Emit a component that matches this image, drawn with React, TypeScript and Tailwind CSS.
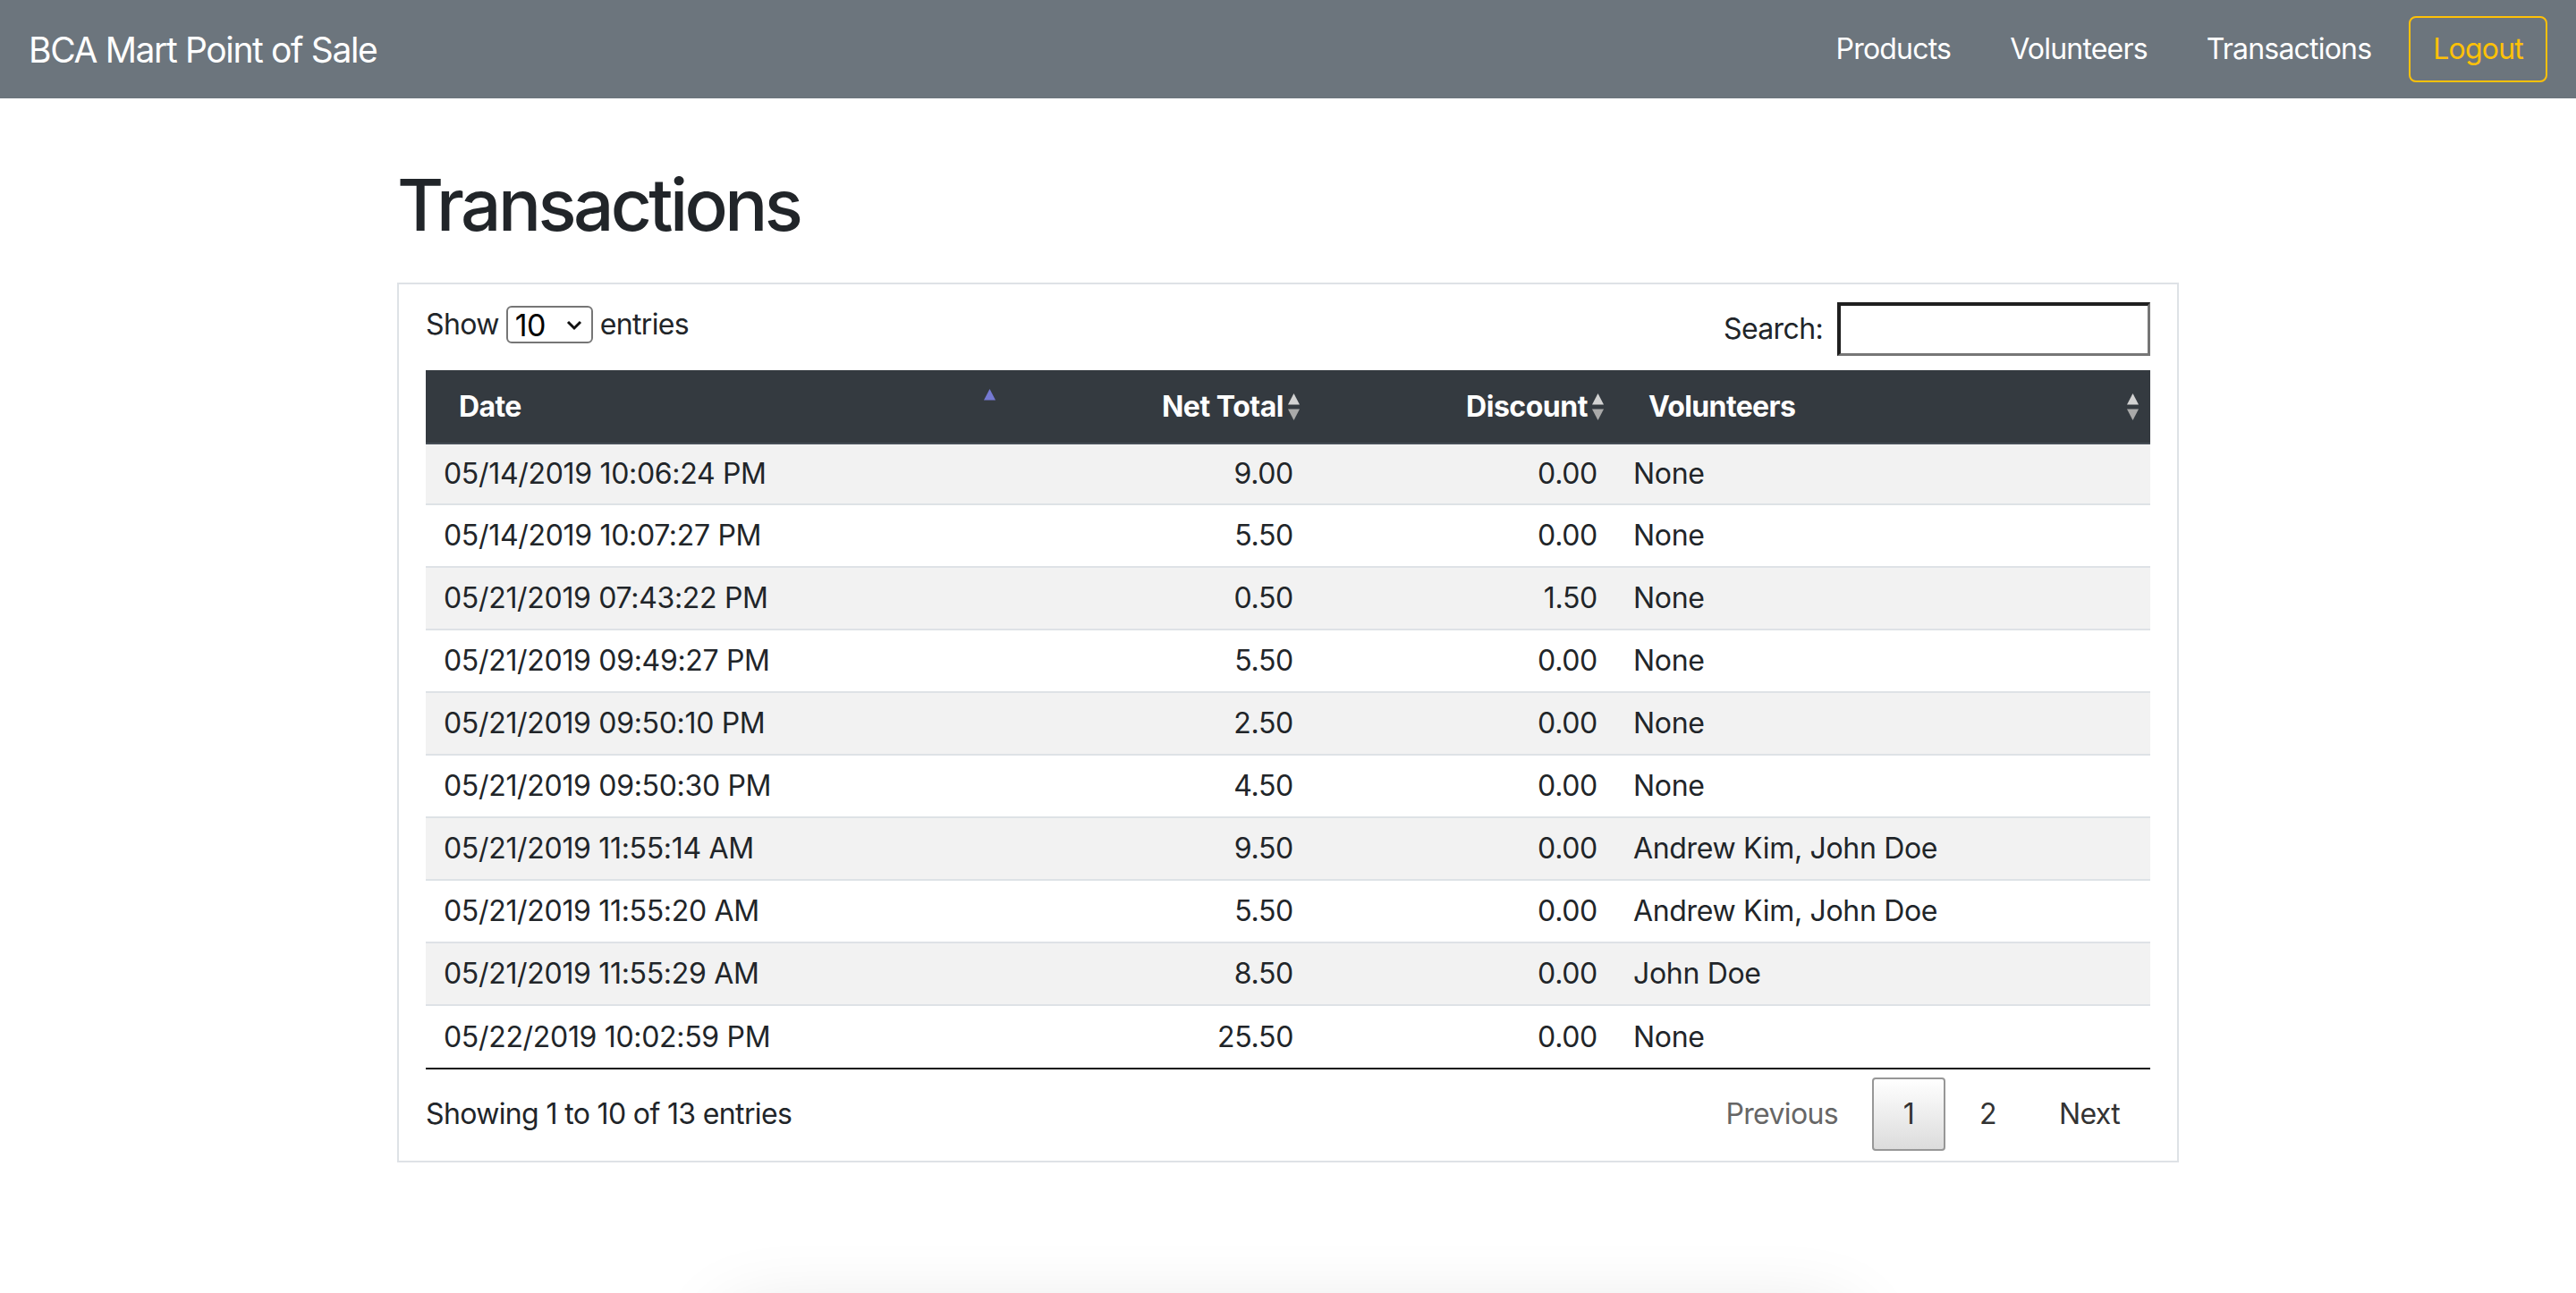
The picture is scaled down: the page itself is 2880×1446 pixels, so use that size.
import React from "react";

const rows = [
  { date: "05/14/2019 10:06:24 PM", net: "9.00", discount: "0.00", volunteers: "None" },
  { date: "05/14/2019 10:07:27 PM", net: "5.50", discount: "0.00", volunteers: "None" },
  { date: "05/21/2019 07:43:22 PM", net: "0.50", discount: "1.50", volunteers: "None" },
  { date: "05/21/2019 09:49:27 PM", net: "5.50", discount: "0.00", volunteers: "None" },
  { date: "05/21/2019 09:50:10 PM", net: "2.50", discount: "0.00", volunteers: "None" },
  { date: "05/21/2019 09:50:30 PM", net: "4.50", discount: "0.00", volunteers: "None" },
  { date: "05/21/2019 11:55:14 AM", net: "9.50", discount: "0.00", volunteers: "Andrew Kim, John Doe" },
  { date: "05/21/2019 11:55:20 AM", net: "5.50", discount: "0.00", volunteers: "Andrew Kim, John Doe" },
  { date: "05/21/2019 11:55:29 AM", net: "8.50", discount: "0.00", volunteers: "John Doe" },
  { date: "05/22/2019 10:02:59 PM", net: "25.50", discount: "0.00", volunteers: "None" }
];

function SortBoth() {
  return (
    <svg width="15" height="32" viewBox="0 0 15 32" className="shrink-0">
      <path d="M7.5 1 L14 13.5 L1 13.5 Z" fill="#d2d2d2" />
      <path d="M7.5 31 L14 18.5 L1 18.5 Z" fill="#a9a9a9" />
    </svg>
  );
}

function SortAsc() {
  return (
    <svg width="15" height="32" viewBox="0 0 15 32" className="shrink-0">
      <path d="M7.5 1 L14 13.5 L1 13.5 Z" fill="#7579d2" />
    </svg>
  );
}

export default function App() {
  return (
    <div className="h-[1446px] w-full overflow-hidden bg-white font-['Inter',sans-serif] text-[#212529]">
      <nav className="flex h-[110px] items-center justify-between bg-[#6c757d] px-[32px]">
        <div className="text-[39px] leading-none tracking-[-0.035em] text-white">BCA Mart Point of Sale</div>
        <div className="flex items-center">
          <div className="flex items-center gap-[66px] text-[32px] tracking-[-0.025em] text-white">
            <span>Products</span>
            <span>Volunteers</span>
            <span>Transactions</span>
          </div>
          <button className="ml-[42px] flex h-[74px] items-center rounded-[8px] border-2 border-[#ffc107] px-[25px] text-[32px] tracking-[-0.025em] text-[#ffc107]">
            Logout
          </button>
        </div>
      </nav>

      <main className="mx-auto w-[1992px]">
        <h1 className="mt-[71px] text-[80px] font-medium leading-[96px] tracking-[-0.045em]">Transactions</h1>

        <section className="mt-[39px] border-2 border-[#dee2e6] px-[30px] pb-[11px] pt-[20px]">
          <div className="flex h-[60px] items-start justify-between">
            <div className="mt-[4px] flex h-[42px] items-center gap-[8px] text-[32px] tracking-[-0.02em]">
              <span>Show</span>
              <div className="relative flex h-[42px] w-[97px] items-center rounded-[6px] border-2 border-[#767676] pl-[8px] text-[34px] text-black">
                <span>10</span>
                <svg width="18" height="12" viewBox="0 0 18 12" className="absolute right-[10px] top-[14px]">
                  <path d="M2 2 L9 9 L16 2" fill="none" stroke="#111" strokeWidth="3" />
                </svg>
              </div>
              <span>entries</span>
            </div>
            <div className="flex h-[60px] items-center gap-[16px] text-[32px] tracking-[-0.02em]">
              <span>Search:</span>
              <div className="h-[60px] w-[350px] border-b-[3px] border-l-[4px] border-r-[3px] border-t-[4px] border-b-[#767676] border-l-[#1f1f1f] border-r-[#767676] border-t-[#1f1f1f] bg-white" />
            </div>
          </div>

          <div className="mt-[16px] border-b-2 border-[#111111]">
            <table className="w-full table-fixed border-collapse text-[32px] tracking-[-0.01em]">
              <colgroup>
                <col className="w-[650px]" />
                <col className="w-[340px]" />
                <col className="w-[340px]" />
                <col />
              </colgroup>
              <thead>
                <tr className="h-[82px] border-b-2 border-[#454d55] bg-[#343a40] text-white">
                  <th className="pl-[37px] pr-[12px] font-bold">
                    <div className="flex items-center justify-between">
                      <span className="tracking-[-0.02em]">Date</span>
                      <span className="-mt-[10px]">
                        <SortAsc />
                      </span>
                    </div>
                  </th>
                  <th className="pr-[12px] font-bold">
                    <div className="flex items-center justify-end gap-[4px]">
                      <span className="tracking-[-0.015em]">Net Total</span>
                      <SortBoth />
                    </div>
                  </th>
                  <th className="pr-[12px] font-bold">
                    <div className="flex items-center justify-end gap-[4px]">
                      <span className="tracking-[-0.015em]">Discount</span>
                      <SortBoth />
                    </div>
                  </th>
                  <th className="pl-[37px] pr-[12px] font-bold">
                    <div className="flex items-center justify-between">
                      <span className="tracking-[-0.02em]">Volunteers</span>
                      <SortBoth />
                    </div>
                  </th>
                </tr>
              </thead>
              <tbody>
                {rows.map((r, i) => (
                  <tr
                    key={i}
                    className={`${i === 0 ? "h-[68px]" : "h-[70px] border-t-2 border-[#dee2e6]"} ${
                      i % 2 === 0 ? "bg-[#f2f2f2]" : "bg-white"
                    }`}
                  >
                    <td className="px-[20px]">{r.date}</td>
                    <td className="px-[20px] text-right">{r.net}</td>
                    <td className="px-[20px] text-right">{r.discount}</td>
                    <td className="px-[20px]">{r.volunteers}</td>
                  </tr>
                ))}
              </tbody>
            </table>
          </div>

          <div className="mt-[9px] flex h-[82px] items-center justify-between text-[32px] tracking-[-0.02em]">
            <span>Showing 1 to 10 of 13 entries</span>
            <div className="flex h-[82px] items-center gap-[6px]">
              <span className="flex h-full items-center px-[32px] text-[#666666]">Previous</span>
              <span className="flex h-full min-w-[82px] items-center justify-center rounded-[4px] border-2 border-[#979797] bg-gradient-to-b from-white to-[#dcdcdc] px-[30px] text-[#333333]">
                1
              </span>
              <span className="flex h-full items-center px-[32px] text-[#333333]">2</span>
              <span className="flex h-full items-center pl-[32px] pr-[34px] text-[#333333]">Next</span>
            </div>
          </div>
        </section>

        <div className="mx-auto mt-[175px] h-[120px] w-[1250px] bg-white shadow-[0_0_90px_rgba(0,0,0,0.14)]" />
      </main>
    </div>
  );
}
